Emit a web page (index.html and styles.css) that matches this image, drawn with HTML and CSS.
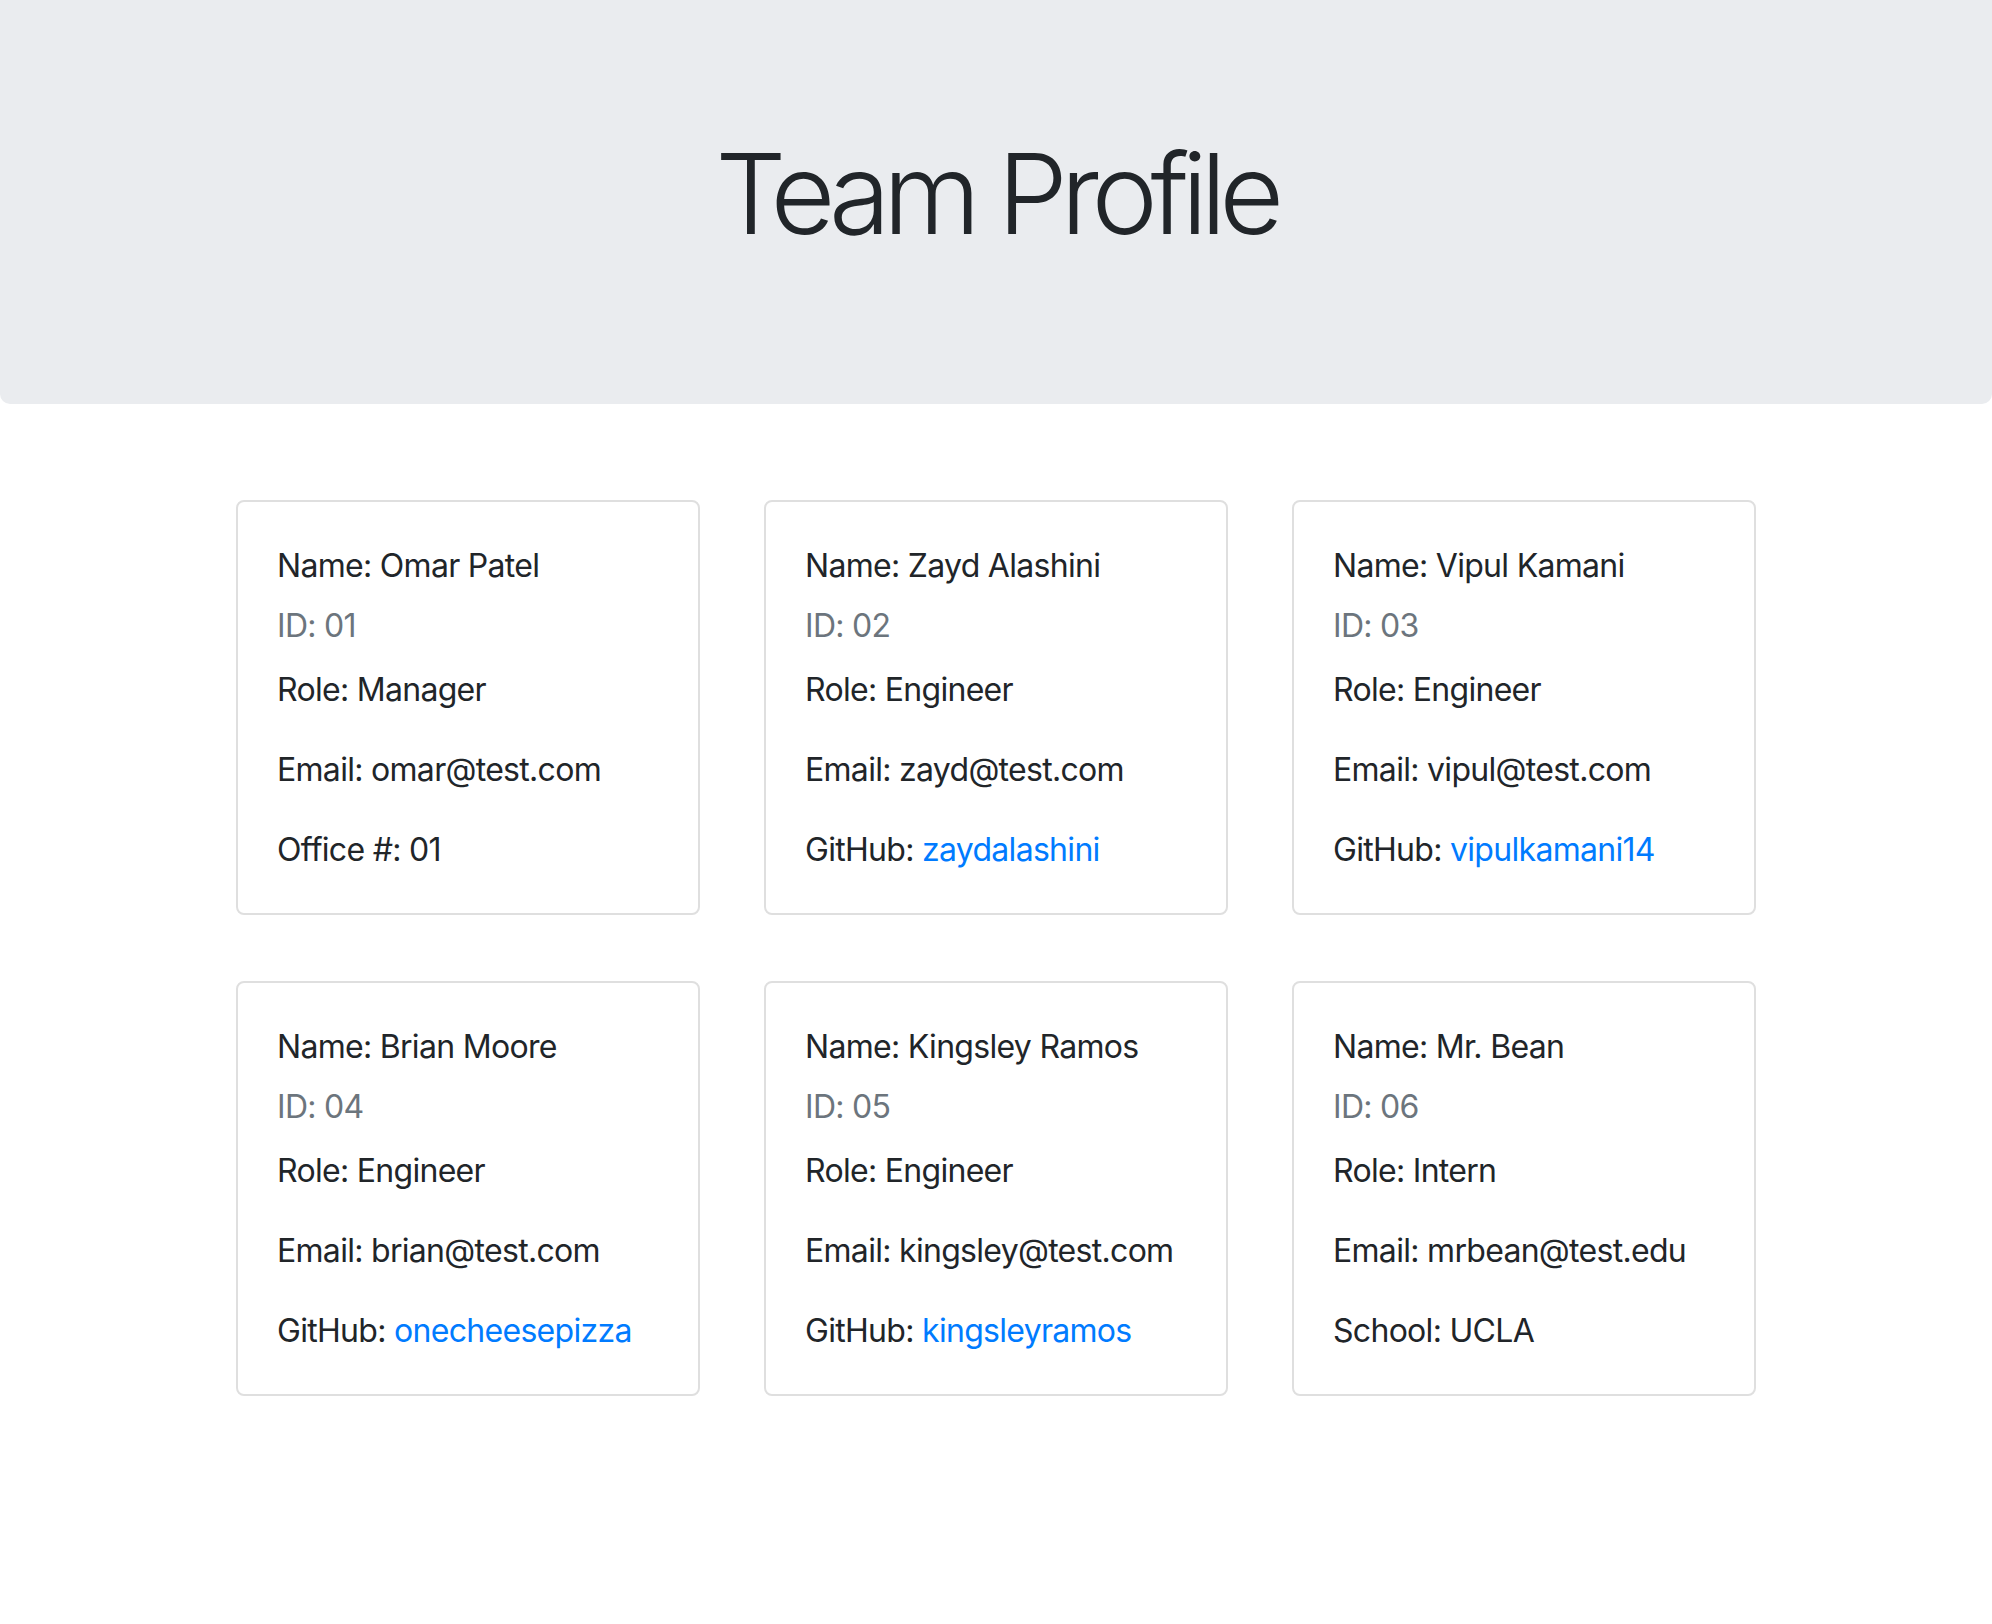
FILE: index.html
```html
<!DOCTYPE html>
<html lang="en">
<head>
<meta charset="utf-8">
<title>Team Profile</title>
<link rel="stylesheet" href="styles.css">
</head>
<body>
<header class="hero">
  <h1 class="hero-title">Team Profile</h1>
</header>
<main class="team">
  <section class="card">
    <p class="line name">Name: Omar Patel</p>
    <p class="line id">ID: 01</p>
    <p class="line role">Role: Manager</p>
    <p class="line email">Email: omar@test.com</p>
    <p class="line extra">Office #: 01</p>
  </section>
  <section class="card">
    <p class="line name">Name: Zayd Alashini</p>
    <p class="line id">ID: 02</p>
    <p class="line role">Role: Engineer</p>
    <p class="line email">Email: zayd@test.com</p>
    <p class="line extra">GitHub: <a class="link" href="#">zaydalashini</a></p>
  </section>
  <section class="card">
    <p class="line name">Name: Vipul Kamani</p>
    <p class="line id">ID: 03</p>
    <p class="line role">Role: Engineer</p>
    <p class="line email">Email: vipul@test.com</p>
    <p class="line extra">GitHub: <a class="link" href="#">vipulkamani14</a></p>
  </section>
  <section class="card">
    <p class="line name">Name: Brian Moore</p>
    <p class="line id">ID: 04</p>
    <p class="line role">Role: Engineer</p>
    <p class="line email">Email: brian@test.com</p>
    <p class="line extra">GitHub: <a class="link" href="#">onecheesepizza</a></p>
  </section>
  <section class="card">
    <p class="line name">Name: Kingsley Ramos</p>
    <p class="line id">ID: 05</p>
    <p class="line role">Role: Engineer</p>
    <p class="line email">Email: kingsley@test.com</p>
    <p class="line extra">GitHub: <a class="link" href="#">kingsleyramos</a></p>
  </section>
  <section class="card">
    <p class="line name">Name: Mr. Bean</p>
    <p class="line id">ID: 06</p>
    <p class="line role">Role: Intern</p>
    <p class="line email">Email: mrbean@test.edu</p>
    <p class="line extra">School: UCLA</p>
  </section>
</main>
</body>
</html>
```
FILE: styles.css
```css
html, body {
  margin: 0;
  padding: 0;
  background: #ffffff;
}
body {
  font-family: Inter, "Noto Sans", "Liberation Sans", sans-serif;
  color: #212529;
}
.hero {
  background: #eaecef;
  padding: 126px 0 144px;
  border-radius: 0 0 10px 10px;
  text-align: center;
}
.hero-title {
  margin: 0;
  font-size: 112px;
  font-weight: 300;
  line-height: 134px;
  color: #212529;
  letter-spacing: -7.4px;
}
.team {
  display: grid;
  grid-template-columns: repeat(3, 464px);
  column-gap: 64px;
  row-gap: 66px;
  justify-content: center;
  padding-top: 96px;
}
.card {
  border: 2px solid #dfdfdf;
  border-radius: 8px;
  padding: 40px 40px 39px 39px;
}
.line {
  margin: 0;
  font-size: 32px;
  line-height: 48px;
  letter-spacing: -0.7px;
}
.name { margin-bottom: 12px; }
.id { margin-bottom: 16px; color: #6c757d; }
.role { margin-bottom: 32px; }
.email { margin-bottom: 32px; }
.extra { margin-bottom: 0; }
.link {
  color: #007bff;
  text-decoration: none;
}
```
